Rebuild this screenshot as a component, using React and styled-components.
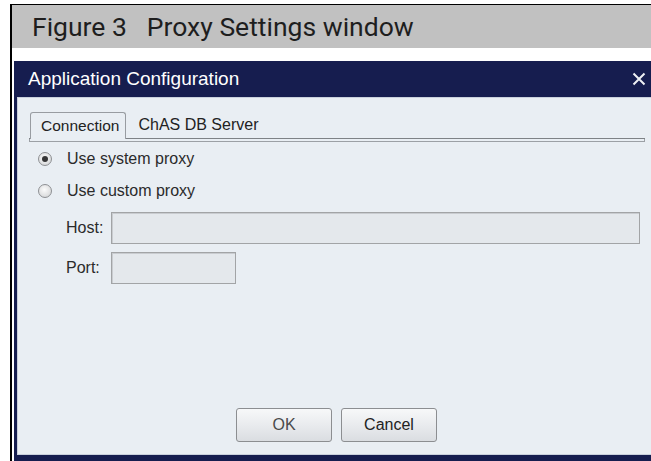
import React from "react";
import styled, { createGlobalStyle } from "styled-components";

const GlobalStyle = createGlobalStyle`
  html, body {
    margin: 0;
    padding: 0;
    background: #fff;
    overflow: hidden;
  }
  body {
    font-family: "Liberation Sans", Arial, sans-serif;
  }
`;

const Page = styled.div`
  margin: 4px 0 0 10px;
  border-top: 1px solid #000;
  border-left: 2px solid #000;
  height: 470px;
  width: 700px;
`;

const Caption = styled.div`
  height: 43px;
  background: #c1c1c1;
  display: flex;
  align-items: center;
  padding-left: 20px;
  font-family: Roboto, "DejaVu Sans", sans-serif;
  font-size: 26.5px;
  color: #1e1e1e;
`;

const CaptionNum = styled.span`
  margin-right: 20px;
`;

const Spacer = styled.div`
  height: 13px;
`;

const Dialog = styled.div`
  margin-left: 2px;
  width: 646px;
  background: #161d4f;
  display: flex;
  flex-direction: column;
  padding: 0 3px 6px 3px;
  box-sizing: border-box;
`;

const TitleBar = styled.div`
  height: 36px;
  display: flex;
  align-items: center;
  justify-content: space-between;
  padding: 0 11px 0 11px;
  color: #fff;
  font-size: 19px;
`;

const Close = styled.svg`
  width: 14px;
  height: 14px;
  display: block;
`;

const Content = styled.div`
  height: 358px;
  background: #e9eef3;
  border-top: 1px solid #c9d0dc;
  border-bottom: 1px solid #c9d0dc;
  border-left: 1px solid #c9d0dc;
  padding: 13px 12px 12px 11px;
  box-sizing: border-box;
  display: flex;
  flex-direction: column;
  color: #2b2b2b;
  font-size: 16px;
`;

const TabStrip = styled.div`
  display: flex;
  align-items: flex-end;
  padding-left: 1px;
  border-bottom: 1px solid #7e8286;
  box-shadow: 0 3px 0 -1px #e9eef3, 0 3px 0 0 #9ca0a5;
  margin-bottom: 4px;
`;

const Tab = styled.div`
  height: 26px;
  display: flex;
  align-items: center;
  padding: ${(p) => (p.active ? "0 6px 0 10px" : "0 0 0 11px")};
  border: ${(p) => (p.active ? "1px solid #989ca1" : "1px solid transparent")};
  border-bottom: none;
  border-radius: 3px 3px 0 0;
  background: #e9eef3;
  margin-bottom: ${(p) => (p.active ? "-1px" : "0")};
  color: #222;
  font-size: ${(p) => (p.active ? "15.5px" : "16px")};
`;

const RadioRow = styled.label`
  height: 32px;
  display: flex;
  align-items: center;
  padding-left: 9px;
  gap: 15px;
`;

const Radio = styled.span`
  width: 14px;
  height: 14px;
  border-radius: 50%;
  border: 1px solid #8e9093;
  background: radial-gradient(circle at 45% 40%, #fbfbfb 0%, #dedfe0 65%, #c4c6c8 100%);
  display: flex;
  align-items: center;
  justify-content: center;
  box-sizing: border-box;

  &::after {
    content: "";
    width: 6px;
    height: 6px;
    border-radius: 50%;
    background: ${(p) => (p.checked ? "#363636" : "transparent")};
  }
`;

const Fields = styled.div`
  display: grid;
  grid-template-columns: 45px 1fr;
  row-gap: 8px;
  padding: 0 5px 0 37px;
  margin-top: 5px;
`;

const FieldLabel = styled.span`
  display: flex;
  align-items: center;
`;

const TextBox = styled.div`
  height: 32px;
  width: ${(p) => p.w || "auto"};
  background: #e4e8ec;
  border: 1px solid #a2a4a6;
  box-shadow: inset 1px 1px 0 #c9ccd0;
  box-sizing: border-box;
`;

const Buttons = styled.div`
  margin-top: auto;
  display: flex;
  justify-content: center;
  gap: 9px;
  padding-right: 1px;
`;

const Button = styled.button`
  width: 96px;
  height: 34px;
  border: 1px solid #8c8e91;
  border-radius: 3px;
  background: linear-gradient(#f7f8f9, #e9ebee 50%, #dadde1);
  font-family: "Liberation Sans", Arial, sans-serif;
  font-size: 16px;
  color: ${(p) => (p.muted ? "#4a4a4a" : "#222")};
  padding: 0;
`;

export default function App() {
  return (
    <>
      <GlobalStyle />
      <Page>
        <Caption>
          <CaptionNum>Figure 3</CaptionNum>
          Proxy Settings window
        </Caption>
        <Spacer />
        <Dialog>
          <TitleBar>
            <span>Application Configuration</span>
            <Close viewBox="0 0 14 14">
              <path d="M1.5 1.5 L12.5 12.5 M12.5 1.5 L1.5 12.5" stroke="#eef0f4" strokeWidth="2" />
            </Close>
          </TitleBar>
          <Content>
            <TabStrip>
              <Tab active>Connection</Tab>
              <Tab>ChAS DB Server</Tab>
            </TabStrip>
            <RadioRow>
              <Radio checked />
              Use system proxy
            </RadioRow>
            <RadioRow>
              <Radio />
              Use custom proxy
            </RadioRow>
            <Fields>
              <FieldLabel>Host:</FieldLabel>
              <TextBox />
              <FieldLabel>Port:</FieldLabel>
              <TextBox w="125px" />
            </Fields>
            <Buttons>
              <Button muted>OK</Button>
              <Button>Cancel</Button>
            </Buttons>
          </Content>
        </Dialog>
      </Page>
    </>
  );
}
